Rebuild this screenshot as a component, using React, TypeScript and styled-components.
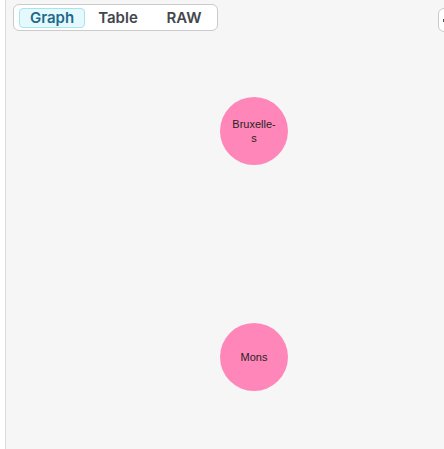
import React from "react";
import styled, { createGlobalStyle } from "styled-components";

interface GraphNode {
  id: string;
  lines: string[];
  x: number;
  y: number;
}

const nodes: GraphNode[] = [
  { id: "bruxelles", lines: ["Bruxelle-", "s"], x: 248, y: 132 },
  { id: "mons", lines: ["Mons"], x: 248, y: 358 },
];

const tabs = ["Graph", "Table", "RAW"];

const App: React.FC = () => {
  return (
    <>
      <GlobalStyle />
      <Page>
        <Gutter />
        <Canvas>
          <Tabs>
            {tabs.map((t, i) => (
              <Tab key={t} active={i === 0}>
                {t}
              </Tab>
            ))}
          </Tabs>
          <SideButton>
            <Dot />
          </SideButton>
          {nodes.map((n) => (
            <Node key={n.id} style={{ left: n.x - 34, top: n.y - 35 }}>
              <Label>
                {n.lines.map((l) => (
                  <span key={l}>{l}</span>
                ))}
              </Label>
            </Node>
          ))}
        </Canvas>
      </Page>
    </>
  );
};

export default App;

const GlobalStyle = createGlobalStyle`
  html, body {
    margin: 0;
    padding: 0;
    background: #fff;
    overflow: hidden;
  }
`;

const Page = styled.div`
  display: flex;
  width: 444px;
  height: 449px;
  overflow: hidden;
`;

const Gutter = styled.div`
  width: 5px;
  flex-shrink: 0;
  background: #fff;
`;

const Canvas = styled.div`
  position: relative;
  flex: 1;
  height: 100%;
  background: #f5f6f5;
  border-left: 1px solid #dcdddc;
`;

const Tabs = styled.div`
  position: absolute;
  left: 7px;
  top: 4px;
  width: 198px;
  height: 25px;
  box-sizing: content-box;
  display: flex;
  align-items: center;
  padding: 0 0 0 5px;
  background: #fff;
  border: 1px solid #c9cac9;
  border-radius: 6px;
`;

const Tab = styled.div<{ active?: boolean }>`
  width: 66px;
  height: 20px;
  box-sizing: border-box;
  display: flex;
  align-items: center;
  justify-content: center;
  font-family: Inter, "Liberation Sans", sans-serif;
  font-size: 15px;
  font-weight: 600;
  color: ${(p) => (p.active ? "#1d6a8c" : "#43474b")};
  background: ${(p) => (p.active ? "#e5f9fc" : "transparent")};
  border: 1px solid ${(p) => (p.active ? "#a3e6ef" : "transparent")};
  border-radius: 4px;
`;

const SideButton = styled.div`
  position: absolute;
  left: 432px;
  top: 8px;
  width: 40px;
  height: 22px;
  background: #fff;
  border: 1px solid #c9cac9;
  border-radius: 6px;
`;

const Dot = styled.div`
  position: absolute;
  left: 4px;
  top: 10px;
  width: 3px;
  height: 3px;
  background: #555;
`;

const Node = styled.div`
  position: absolute;
  width: 68px;
  height: 68px;
  border-radius: 50%;
  background: #fe86b9;
  display: flex;
  align-items: center;
  justify-content: center;
`;

const Label = styled.div`
  display: flex;
  flex-direction: column;
  align-items: center;
  font-family: "Liberation Sans", Arial, sans-serif;
  font-size: 11px;
  line-height: 14px;
  color: #2a1f24;
`;
